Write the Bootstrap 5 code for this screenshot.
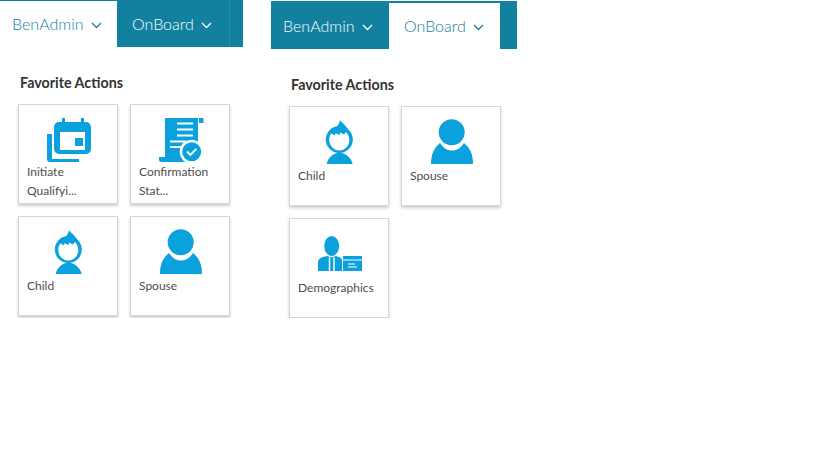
<!DOCTYPE html>
<html lang="en">
<head>
<meta charset="utf-8">
<title>Favorite Actions</title>
<link rel="stylesheet" href="https://cdn.jsdelivr.net/npm/bootstrap@5.3.0/dist/css/bootstrap.min.css">
<style>
body{font-family:"Lato",sans-serif;background:#fff;color:#444;}
.panel-a{width:243px;}
.panel-b{width:246px;margin-left:28px;margin-top:1px;}
.tabbar{background:#12809f;height:47px;padding-top:1px;}
.panel-b .tabbar{height:48px;padding-top:2px;}
.tab-item{height:46px;font-size:16px;font-weight:300;color:#fff;padding:0 0 0 15px;border-radius:0;}
.tab-item:hover,.tab-item:focus{color:#fff;}
.tab-item.is-open,.tab-item.is-open:hover{background:#fff;color:#12809f;}
.tab-ben{width:117px;padding-left:12px;}
.panel-b .tab-ben{width:118px;}
.tab-on{width:113px;border-right:1px solid #2b90ac;}
.panel-b .tab-on{width:111px;border-right:0;}
.tab-item svg{margin-left:7px;margin-top:2px;}
.fav-title{font-size:14.3px;font-weight:700;color:#333;line-height:20px;margin:26px 0 11px 20px;}
.fav-grid{margin-left:18px;width:224px;}
.fav-card{width:100px;height:100px;border:1px solid #d6d6d6;border-radius:0;box-shadow:0 2px 3px rgba(0,0,0,.2);background:#fff;}
.fav-icon{display:block;width:98px;height:59px;}
.fav-icon.short{height:57px;}
.fav-label{font-size:12px;line-height:19px;color:#4d4d4d;padding:0 8px;}
.ink{fill:#0ba1dc;}
.gap-card{gap:12px;}
</style>
</head>
<body>
<div class="d-flex align-items-start">
  <section class="panel-a">
    <nav class="nav tabbar">
      <a class="nav-link tab-item tab-ben is-open d-flex align-items-center" href="#">BenAdmin<svg width="11" height="7" viewBox="0 0 11 7"><path d="M1 1l4.500 4.500L10 1" fill="none" stroke="currentColor" stroke-width="1.300"/></svg></a>
      <a class="nav-link tab-item tab-on d-flex align-items-center" href="#">OnBoard<svg width="11" height="7" viewBox="0 0 11 7"><path d="M1 1l4.500 4.500L10 1" fill="none" stroke="currentColor" stroke-width="1.300"/></svg></a>
    </nav>
    <h2 class="fav-title">Favorite Actions</h2>
    <div class="fav-grid d-flex flex-wrap gap-card">
      <div class="card fav-card">
        <svg class="fav-icon short" viewBox="0 0 98 57"><use href="#i-cal"/></svg>
        <div class="fav-label">Initiate Qualifyi...</div>
      </div>
      <div class="card fav-card">
        <svg class="fav-icon short" viewBox="0 0 98 57"><use href="#i-doc"/></svg>
        <div class="fav-label">Confirmation Stat...</div>
      </div>
      <div class="card fav-card">
        <svg class="fav-icon" viewBox="0 0 98 59"><use href="#i-child"/></svg>
        <div class="fav-label">Child</div>
      </div>
      <div class="card fav-card">
        <svg class="fav-icon" viewBox="0 0 98 59"><use href="#i-spouse"/></svg>
        <div class="fav-label">Spouse</div>
      </div>
    </div>
  </section>
  <section class="panel-b">
    <nav class="nav tabbar">
      <a class="nav-link tab-item tab-ben d-flex align-items-center" href="#">BenAdmin<svg width="11" height="7" viewBox="0 0 11 7"><path d="M1 1l4.500 4.500L10 1" fill="none" stroke="currentColor" stroke-width="1.300"/></svg></a>
      <a class="nav-link tab-item tab-on is-open d-flex align-items-center" href="#">OnBoard<svg width="11" height="7" viewBox="0 0 11 7"><path d="M1 1l4.500 4.500L10 1" fill="none" stroke="currentColor" stroke-width="1.300"/></svg></a>
    </nav>
    <h2 class="fav-title">Favorite Actions</h2>
    <div class="fav-grid d-flex flex-wrap gap-card">
      <div class="card fav-card">
        <svg class="fav-icon" viewBox="0 0 98 59"><use href="#i-child"/></svg>
        <div class="fav-label">Child</div>
      </div>
      <div class="card fav-card">
        <svg class="fav-icon" viewBox="0 0 98 59"><use href="#i-spouse"/></svg>
        <div class="fav-label">Spouse</div>
      </div>
      <div class="card fav-card">
        <svg class="fav-icon" viewBox="0 0 98 59"><use href="#i-demo"/></svg>
        <div class="fav-label">Demographics</div>
      </div>
    </div>
  </section>
</div>
<svg width="0" height="0" class="position-absolute" aria-hidden="true">
  <defs>
    <g id="i-cal">
      <path class="ink" d="M28 29h5v25h27v3H31a3 3 0 0 1-3-3z"/>
      <path class="ink" d="M43 13h3v4h16v-4h3v4h2a5 5 0 0 1 5 5v22a5 5 0 0 1-5 5H40a5 5 0 0 1-5-5V22a5 5 0 0 1 5-5h3z"/>
      <rect x="41" y="27" width="25" height="18" fill="#fff"/>
      <rect class="ink" x="56" y="33" width="8" height="8"/>
    </g>
    <g id="i-doc">
      <path class="ink" d="M34 13h33v39H34z"/>
      <path class="ink" d="M28 52h34v5H30a2 2 0 0 1-2-2z"/>
      <rect class="ink" x="68" y="13" width="4.500" height="5"/>
      <g fill="#fff">
        <rect x="46" y="17.500" width="16" height="2"/>
        <rect x="46" y="23.500" width="16" height="2"/>
        <rect x="46" y="29.500" width="16" height="2"/>
        <rect x="39" y="35.500" width="16" height="2"/>
        <rect x="39" y="41" width="12" height="2"/>
      </g>
      <circle cx="60.700" cy="46.700" r="12" fill="#fff"/>
      <circle class="ink" cx="60.700" cy="46.700" r="9.500"/>
      <path d="M56 46.500l3.400 3.400 6-6" fill="none" stroke="#fff" stroke-width="2"/>
    </g>
    <g id="i-child">
      <circle class="ink" cx="49.300" cy="32.500" r="13.500"/>
      <path class="ink" d="M39 24c5-1 9.500-4 11-11 2 4 8 5 9 14z"/>
      <path fill="#fff" d="M39.300 33c0-3 .7-5 2-6.500l3.700 2 .6-2.500 3.900 2.200.5-2.700 4 2 2-2.500c2.500 2.500 3.300 5.500 3.300 8.500a10 10 0 0 1-20 0z"/>
      <path class="ink" d="M36.700 57c1.300-7 7.300-11.300 12.600-11.300 5.700 0 11.700 4.300 13.400 11.300z"/>
    </g>
    <g id="i-spouse">
      <circle class="ink" cx="49.700" cy="25.300" r="13"/>
      <path class="ink" d="M29 57c0-10 3-16 9-21 4 6 8 7.500 12 7.500s8-1.500 12-7.500c6 5 9 11 9 21z"/>
    </g>
    <g id="i-demo">
      <ellipse class="ink" cx="41.700" cy="27" rx="7.500" ry="10"/>
      <path class="ink" d="M28 52V43c0-2.500 2-4 5-5l4-1 4.700 1.500L46 37l4 1.500c1.500.5 2 1.500 2 3V52z"/>
      <path d="M39.500 38.500V52M44 38.500V52" stroke="#fff" stroke-width="1.400" fill="none"/>
      <rect class="ink" x="53" y="37" width="19" height="15"/>
      <path d="M53 41h19M58 45h7M58 48h9" stroke="#fff" fill="none"/>
    </g>
  </defs>
</svg>
</body>
</html>
